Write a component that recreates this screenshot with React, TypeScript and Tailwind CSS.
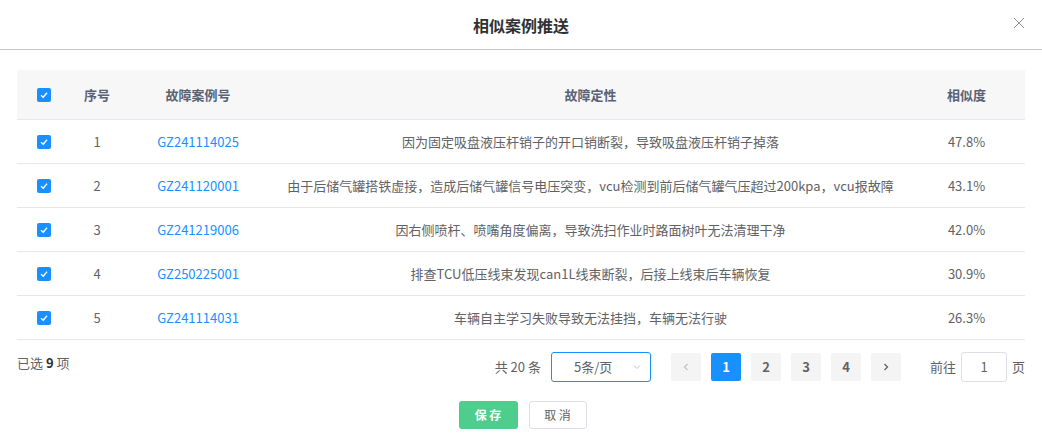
import React from "react";

const rows = [
  ["1", "GZ241114025", "因为固定吸盘液压杆销子的开口销断裂，导致吸盘液压杆销子掉落", "47.8%"],
  ["2", "GZ241120001", "由于后储气罐搭铁虚接，造成后储气罐信号电压突变，vcu检测到前后储气罐气压超过200kpa，vcu报故障", "43.1%"],
  ["3", "GZ241219006", "因右侧喷杆、喷嘴角度偏离，导致洗扫作业时路面树叶无法清理干净", "42.0%"],
  ["4", "GZ250225001", "排查TCU低压线束发现can1L线束断裂，后接上线束后车辆恢复", "30.9%"],
  ["5", "GZ241114031", "车辆自主学习失败导致无法挂挡，车辆无法行驶", "26.3%"],
];

const Check = () => (
  <span className="inline-flex w-[14px] h-[14px] rounded-[2px] bg-[#1890ff] items-center justify-center">
    <svg width="10" height="10" viewBox="0 0 10 10"><path d="M2 5.2 L4.2 7.3 L8 2.8" fill="none" stroke="white" strokeWidth="1.4" /></svg>
  </span>
);

export default function App() {
  return (
    <div className="w-[1042px] h-[448px] bg-white text-[13px] text-[#606266]" style={{ fontFamily: '"Noto Sans CJK SC", "Noto Sans", sans-serif' }}>
      <div className="h-[50px] border-b border-[#c8c8c8] flex items-center justify-center relative">
        <span className="text-[16px] font-bold text-[#303133]">相似案例推送</span>
        <svg className="absolute right-[17px] top-[17px]" width="12" height="12" viewBox="0 0 12 12"><path d="M1 1L11 11M11 1L1 11" stroke="#909399" strokeWidth="1" /></svg>
      </div>
      <div className="mx-[17px] mt-[20px]">
        <div className="flex h-[50px] bg-[#f7f7f7] border-b border-[#e4e7ed] items-center font-bold text-[#5a6274]">
          <div className="w-[54px] flex justify-center"><Check /></div>
          <div className="w-[52px] text-center">序号</div>
          <div className="w-[150px] text-center">故障案例号</div>
          <div className="w-[635px] text-center">故障定性</div>
          <div className="flex-1 text-center">相似度</div>
        </div>
        {rows.map((r) => (
          <div key={r[0]} className="flex h-[44px] border-b border-[#e4e7ed] items-center">
            <div className="w-[54px] flex justify-center"><Check /></div>
            <div className="w-[52px] text-center">{r[0]}</div>
            <div className="w-[150px] text-center text-[#1890ff]">{r[1]}</div>
            <div className="w-[635px] text-center px-[12px] truncate">{r[2]}</div>
            <div className="flex-1 text-center">{r[3]}</div>
          </div>
        ))}
      </div>
      <div className="flex mx-[17px] mt-[12px] items-start">
        <div className="pt-[1px]">已选 <b className="text-[#303133]">9</b> 项</div>
        <div className="ml-auto flex items-center">
          <span className="mr-[10px]">共 20 条</span>
          <div className="w-[100px] h-[30px] border border-[#1890ff] rounded-[3px] flex items-center pl-[22px] pr-[8px]">
            <span>5条/页</span>
            <svg className="ml-auto" width="10" height="10" viewBox="0 0 10 10"><path d="M2 3.5L5 6.5L8 3.5" fill="none" stroke="#c0c4cc" /></svg>
          </div>
          <div className="flex gap-[10px] ml-[20px]">
            <div className="w-[30px] h-[28px] bg-[#f4f4f5] rounded-[2px] flex items-center justify-center"><svg width="10" height="10" viewBox="0 0 10 10"><path d="M6.5 2L3.5 5L6.5 8" fill="none" stroke="#c0c4cc" strokeWidth="1.3" /></svg></div>
            {["1", "2", "3", "4"].map((n) => (
              <div key={n} className={`w-[30px] h-[28px] rounded-[2px] flex items-center justify-center font-bold ${n === "1" ? "bg-[#1890ff] text-white" : "bg-[#f4f4f5] text-[#606266]"}`}>{n}</div>
            ))}
            <div className="w-[30px] h-[28px] bg-[#f4f4f5] rounded-[2px] flex items-center justify-center"><svg width="10" height="10" viewBox="0 0 10 10"><path d="M3.5 2L6.5 5L3.5 8" fill="none" stroke="#606266" strokeWidth="1.3" /></svg></div>
          </div>
          <span className="ml-[29px]">前往</span>
          <div className="w-[46px] h-[30px] border border-[#dcdfe6] rounded-[3px] mx-[5px] flex items-center justify-center">1</div>
          <span>页</span>
        </div>
      </div>
      <div className="flex justify-center gap-[11px] mt-[19px] ml-[3px]">
        <div className="w-[59px] h-[28px] bg-[#4fcd8d] text-white rounded-[3px] flex items-center justify-center text-[12px] font-bold">保 存</div>
        <div className="w-[58px] h-[28px] border border-[#dcdfe6] rounded-[3px] flex items-center justify-center text-[12px]">取 消</div>
      </div>
    </div>
  );
}
